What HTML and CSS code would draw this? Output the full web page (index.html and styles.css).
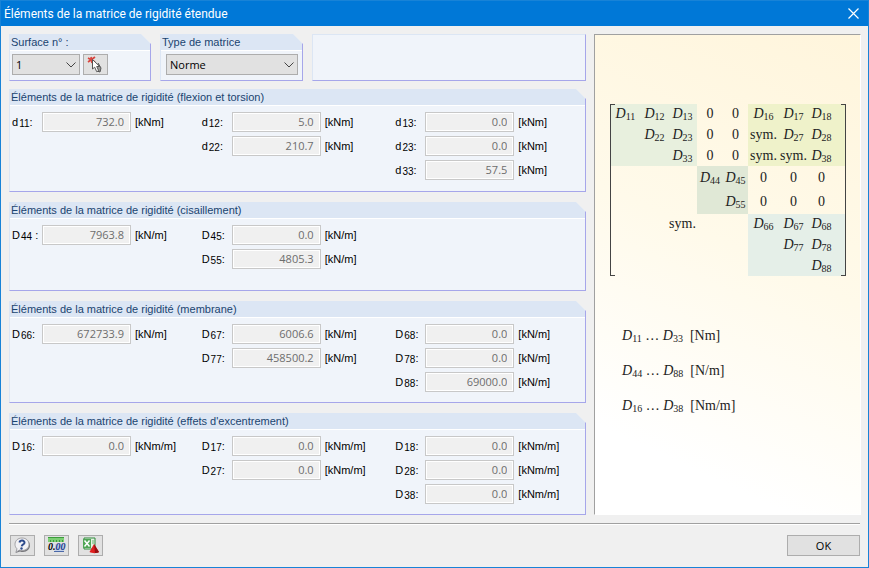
FILE: index.html
```html
<!DOCTYPE html>
<html lang="fr">
<head>
  <meta charset="utf-8">
  <title>Éléments de la matrice de rigidité étendue</title>
  <link rel="stylesheet" href="styles.css">
</head>
<body>
  <header class="titlebar">
    <h1>Éléments de la matrice de rigidité étendue</h1>
    <button class="close" type="button" aria-label="Fermer">
      <svg width="11" height="11" viewBox="0 0 11 11"><path d="M.5.5l10 10M10.5.5l-10 10" stroke="#fff" stroke-width="1.2" fill="none"/></svg>
    </button>
  </header>

  <main class="content">
    <div class="left">
      <div class="top-row">
        <section class="group">
          <label class="group-title" for="surface">Surface n° :</label>
          <div class="controls">
            <span class="select select-small">
              <select id="surface"><option>1</option></select>
              <svg width="10" height="6" viewBox="0 0 10 6"><path d="M.5.5L5 5L9.5.5" stroke="#444" fill="none"/></svg>
            </span>
            <button class="tool" type="button" aria-label="Sélectionner la surface">
              <svg width="19" height="17" viewBox="0 0 19 17">
                <path d="M2 2l7 4M9 1L2 6M5 1l1 6" stroke="#d8453f" stroke-width="1.7"/>
                <path d="M12 7l3 5-1 4-3-1" fill="#999" stroke="#555"/>
                <path d="M6.500 3.500v9.500l2.200-1.800 2 4.500 2-1-2-4.200h3z" fill="#fff" stroke="#555"/>
              </svg>
            </button>
          </div>
        </section>
        <section class="group">
          <label class="group-title" for="type">Type de matrice</label>
          <div class="controls controls-type">
            <span class="select">
              <select id="type"><option>Norme</option></select>
              <svg width="10" height="6" viewBox="0 0 10 6"><path d="M.5.5L5 5L9.5.5" stroke="#444" fill="none"/></svg>
            </span>
          </div>
        </section>
        <div class="group-empty"></div>
      </div>

      <section class="group flexion">
        <h2 class="group-title">Éléments de la matrice de rigidité (flexion et torsion)</h2>
        <div class="fields">
          <div class="col">
            <div class="field"><label for="d11">d<sub>11</sub>:</label><input id="d11" type="text" value="732.0" disabled><span>[kNm]</span></div>
          </div>
          <div class="col">
            <div class="field"><label for="d12">d<sub>12</sub>:</label><input id="d12" type="text" value="5.0" disabled><span>[kNm]</span></div>
            <div class="field"><label for="d22">d<sub>22</sub>:</label><input id="d22" type="text" value="210.7" disabled><span>[kNm]</span></div>
          </div>
          <div class="col">
            <div class="field"><label for="d13">d<sub>13</sub>:</label><input id="d13" type="text" value="0.0" disabled><span>[kNm]</span></div>
            <div class="field"><label for="d23">d<sub>23</sub>:</label><input id="d23" type="text" value="0.0" disabled><span>[kNm]</span></div>
            <div class="field"><label for="d33">d<sub>33</sub>:</label><input id="d33" type="text" value="57.5" disabled><span>[kNm]</span></div>
          </div>
        </div>
      </section>

      <section class="group cisaillement">
        <h2 class="group-title">Éléments de la matrice de rigidité (cisaillement)</h2>
        <div class="fields">
          <div class="col">
            <div class="field"><label for="d44">D<sub>44</sub> :</label><input id="d44" type="text" value="7963.8" disabled><span>[kN/m]</span></div>
          </div>
          <div class="col">
            <div class="field"><label for="d45">D<sub>45</sub>:</label><input id="d45" type="text" value="0.0" disabled><span>[kN/m]</span></div>
            <div class="field"><label for="d55">D<sub>55</sub>:</label><input id="d55" type="text" value="4805.3" disabled><span>[kN/m]</span></div>
          </div>
        </div>
      </section>

      <section class="group membrane">
        <h2 class="group-title">Éléments de la matrice de rigidité (membrane)</h2>
        <div class="fields">
          <div class="col">
            <div class="field"><label for="d66">D<sub>66</sub>:</label><input id="d66" type="text" value="672733.9" disabled><span>[kN/m]</span></div>
          </div>
          <div class="col">
            <div class="field"><label for="d67">D<sub>67</sub>:</label><input id="d67" type="text" value="6006.6" disabled><span>[kN/m]</span></div>
            <div class="field"><label for="d77">D<sub>77</sub>:</label><input id="d77" type="text" value="458500.2" disabled><span>[kN/m]</span></div>
          </div>
          <div class="col">
            <div class="field"><label for="d68">D<sub>68</sub>:</label><input id="d68" type="text" value="0.0" disabled><span>[kN/m]</span></div>
            <div class="field"><label for="d78">D<sub>78</sub>:</label><input id="d78" type="text" value="0.0" disabled><span>[kN/m]</span></div>
            <div class="field"><label for="d88">D<sub>88</sub>:</label><input id="d88" type="text" value="69000.0" disabled><span>[kN/m]</span></div>
          </div>
        </div>
      </section>

      <section class="group excentrement">
        <h2 class="group-title">Éléments de la matrice de rigidité (effets d'excentrement)</h2>
        <div class="fields">
          <div class="col">
            <div class="field"><label for="d16">D<sub>16</sub>:</label><input id="d16" type="text" value="0.0" disabled><span>[kNm/m]</span></div>
          </div>
          <div class="col">
            <div class="field"><label for="d17">D<sub>17</sub>:</label><input id="d17" type="text" value="0.0" disabled><span>[kNm/m]</span></div>
            <div class="field"><label for="d27">D<sub>27</sub>:</label><input id="d27" type="text" value="0.0" disabled><span>[kNm/m]</span></div>
          </div>
          <div class="col">
            <div class="field"><label for="d18">D<sub>18</sub>:</label><input id="d18" type="text" value="0.0" disabled><span>[kNm/m]</span></div>
            <div class="field"><label for="d28">D<sub>28</sub>:</label><input id="d28" type="text" value="0.0" disabled><span>[kNm/m]</span></div>
            <div class="field"><label for="d38">D<sub>38</sub>:</label><input id="d38" type="text" value="0.0" disabled><span>[kNm/m]</span></div>
          </div>
        </div>
      </section>
    </div>

    <aside class="preview">
      <div class="matrix">
        <div class="shade-flexion"></div>
        <div class="shade-excentrement"></div>
        <div class="shade-cisaillement"></div>
        <div class="shade-membrane"></div>

        <span class="r1 c1"><i>D</i><sub>11</sub></span>
        <span class="r1 c2"><i>D</i><sub>12</sub></span>
        <span class="r1 c3"><i>D</i><sub>13</sub></span>
        <span class="r1 c4">0</span>
        <span class="r1 c5">0</span>
        <span class="r1 c6"><i>D</i><sub>16</sub></span>
        <span class="r1 c7"><i>D</i><sub>17</sub></span>
        <span class="r1 c8"><i>D</i><sub>18</sub></span>

        <span class="r2 c2"><i>D</i><sub>22</sub></span>
        <span class="r2 c3"><i>D</i><sub>23</sub></span>
        <span class="r2 c4">0</span>
        <span class="r2 c5">0</span>
        <span class="r2 c6">sym.</span>
        <span class="r2 c7"><i>D</i><sub>27</sub></span>
        <span class="r2 c8"><i>D</i><sub>28</sub></span>

        <span class="r3 c3"><i>D</i><sub>33</sub></span>
        <span class="r3 c4">0</span>
        <span class="r3 c5">0</span>
        <span class="r3 c6">sym.</span>
        <span class="r3 c7">sym.</span>
        <span class="r3 c8"><i>D</i><sub>38</sub></span>

        <span class="r4 c4"><i>D</i><sub>44</sub></span>
        <span class="r4 c5"><i>D</i><sub>45</sub></span>
        <span class="r4 c6">0</span>
        <span class="r4 c7">0</span>
        <span class="r4 c8">0</span>

        <span class="r5 c5"><i>D</i><sub>55</sub></span>
        <span class="r5 c6">0</span>
        <span class="r5 c7">0</span>
        <span class="r5 c8">0</span>

        <span class="r6 c3">sym.</span>
        <span class="r6 c6"><i>D</i><sub>66</sub></span>
        <span class="r6 c7"><i>D</i><sub>67</sub></span>
        <span class="r6 c8"><i>D</i><sub>68</sub></span>

        <span class="r7 c7"><i>D</i><sub>77</sub></span>
        <span class="r7 c8"><i>D</i><sub>78</sub></span>

        <span class="r8 c8"><i>D</i><sub>88</sub></span>
      </div>
      <div class="units">
        <p><i>D</i><sub>11</sub> … <i>D</i><sub>33</sub>&nbsp; [Nm]</p>
        <p><i>D</i><sub>44</sub> … <i>D</i><sub>88</sub>&nbsp; [N/m]</p>
        <p><i>D</i><sub>16</sub> … <i>D</i><sub>38</sub>&nbsp; [Nm/m]</p>
      </div>
    </aside>
  </main>

  <footer class="footer">
    <button class="tool" type="button" aria-label="Aide">
      <svg width="19" height="17" viewBox="0 0 19 17">
        <path d="M10 2c4.500 0 7 3 7 6.500S14 15 10 15c-1 0-2-.2-3-.6L2.500 16l1.300-3.500z" fill="#77777b"/>
        <path d="M9 1c4.300 0 7 2.900 7 6.300s-2.700 6.200-7 6.200c-.9 0-1.700-.1-2.500-.4L3 15l1-3.200C2.700 10.700 2 9 2 7.300 2 3.900 4.700 1 9 1z" fill="#f2f2f5" stroke="#a2a2a6"/>
        <path d="M6.500 5.500c.5-2.700 5.200-2.500 5 .2 0 1.800-2.500 1.600-2.800 3.600" fill="none" stroke="#2c4a8c" stroke-width="2"/>
        <circle cx="8.500" cy="11.500" r="1.200" fill="#2c4a8c"/>
      </svg>
    </button>
    <button class="tool" type="button" aria-label="Décimales">
      <svg width="19" height="17" viewBox="0 0 19 17">
        <path d="M1 0h16v5H1z" fill="#7ccf74"/>
        <path d="M1 .5h16M3.500 3v2M6.500 3v2M9.500 3v2M12.500 3v2M15.500 3v2" stroke="#3c9c3c"/>
        <path d="M8 7h9v8H8z" fill="#c3d0e8"/>
        <text x="1" y="13" class="icon-digits">0.<tspan fill="#1c3c8c">00</tspan></text>
        <path d="M7 14.500h10" stroke="#4a68a8"/>
      </svg>
    </button>
    <button class="tool" type="button" aria-label="Exporter vers Excel">
      <svg width="19" height="17" viewBox="0 0 19 17">
        <path d="M3 1h11v11H3z" fill="#e4f2e2" stroke="#2f8a3b"/>
        <path d="M2 2h8v9H2z" fill="#4fa655"/>
        <path d="M3.500 3.500l5 6M8.500 3.500l-5 6" stroke="#fff" stroke-width="1.500"/>
        <path d="M11 4h2M11 6h2" stroke="#6bb36f"/>
        <path d="M13 7l5 8c-2 1.500-7 1.500-9.500 0z" fill="#e02020"/>
        <path d="M13 7l5 8c-1 .7-2.300 1-4 1z" fill="#980f12"/>
      </svg>
    </button>
    <button class="ok" type="button">OK</button>
  </footer>
</body>
</html>
```
FILE: styles.css
```css
* {
  box-sizing: border-box;
}

body {
  margin: 0;
  min-height: 100vh;
  display: flex;
  flex-direction: column;
  background: #f0f0f0;
  border: 1px solid #1883d7;
  font-family: "Liberation Sans", Arial, sans-serif;
  font-size: 11px;
  color: #000;
}

h1, h2, p {
  margin: 0;
  font-weight: normal;
}

button, select, input {
  margin: 0;
  padding: 0;
  border-radius: 0;
  font-family: "Open Sans", sans-serif;
  font-size: 11px;
  color: #000;
}

button {
  display: flex;
  align-items: center;
  justify-content: center;
}

/* title bar */
.titlebar {
  display: flex;
  align-items: center;
  justify-content: space-between;
  height: 25px;
  padding: 0 9px 0 3px;
  background: #0078d7;
}

.titlebar h1 {
  font-family: Roboto, sans-serif;
  font-size: 12px;
  line-height: 24px;
  color: #fff;
}

.close {
  border: none;
  background: none;
}

/* layout */
.content {
  flex: 1;
  display: grid;
  grid-template-columns: 577fr 267fr;
  gap: 8px;
  padding: 8px 7px 8px 8px;
}

.left {
  display: flex;
  flex-direction: column;
  gap: 10px;
}

.top-row {
  display: grid;
  grid-template-columns: 142fr 143fr 274fr;
  column-gap: 9px;
  margin-bottom: -2px;
}

/* groups */
.group {
  background: #f0f4fa;
  border-left: 1px solid #dce6f4;
  border-right: 1px solid #a6a6ea;
  border-bottom: 1px solid #a6a6ea;
  clip-path: polygon(0 0, calc(100% - 10px) 0, 100% 10px, 100% 100%, 0 100%);
}

.group-title {
  display: block;
  height: 17px;
  padding-left: 1px;
  background: #dce6f4;
  border-bottom: 1px solid #fff;
  font-size: 11px;
  line-height: 17px;
  color: #1a4470;
}

.group-empty {
  background: #f0f4fa;
  border: 1px solid #dce6f4;
  border-right-color: #a6a6ea;
  border-bottom-color: #a6a6ea;
}

.flexion {
  min-height: 103px;
}

.cisaillement {
  min-height: 89px;
}

.membrane, .excentrement {
  min-height: 102px;
}

.controls {
  display: flex;
  gap: 3px;
  padding: 3px 4px 5px 2px;
}

.controls-type {
  padding-left: 5px;
}

.select {
  position: relative;
  flex: 1;
}

.select-small {
  flex: 0 0 68px;
}

.select select {
  display: block;
  width: 100%;
  height: 21px;
  padding-left: 3px;
  appearance: none;
  background: #e1e1e1;
  border: 1px solid #adadad;
}

.select svg {
  position: absolute;
  right: 4px;
  top: 8px;
  pointer-events: none;
}

.tool {
  width: 25px;
  height: 21px;
  background: #e1e1e1;
  border: 1px solid #adadad;
}

/* fields */
.fields {
  display: grid;
  grid-template-columns: 190fr 194fr 190fr;
  padding: 6px 0 8px 2px;
}

.col {
  display: flex;
  flex-direction: column;
  gap: 4px;
}

.field {
  display: flex;
  align-items: center;
  height: 20px;
}

.field label {
  width: 30px;
  white-space: nowrap;
}

.field label sub {
  margin-left: 1px;
  font-size: 10px;
  line-height: 10px;
  vertical-align: -1px;
}

.field input {
  width: 89px;
  height: 20px;
  margin-right: 4px;
  padding: 0 6px 2px 0;
  background: #f0f0f0;
  border: 1px solid #c8c8c8;
  box-shadow: inset 0 0 0 1px #fff;
  text-align: right;
  color: #6d6d6d;
}

/* matrix preview */
.preview {
  padding: 69px 14px 0 15px;
  background: linear-gradient(205deg, #fff5dc 0%, #fffaea 45%, #fff 85%);
  border: 1px solid #fff;
  border-top-color: #a0a0a0;
  border-left-color: #a0a0a0;
  font-family: "Liberation Serif", serif;
  font-size: 14px;
  color: #222;
}

.preview sub {
  font-size: 10px;
  line-height: 10px;
  vertical-align: -2px;
}

.matrix {
  position: relative;
  display: grid;
  grid-template-columns: 31fr 27fr 29fr 26fr 25fr 31fr 29fr 27fr 11fr;
  grid-template-rows: 20px 22px 20px 24px 24px 20px 22px 20px;
}

.matrix::before, .matrix::after {
  content: "";
  position: absolute;
  top: 0;
  bottom: 0;
  left: 0;
  width: 4px;
  border: 1px solid #444;
  border-right: none;
}

.matrix::after {
  left: auto;
  right: 0;
  border-right: 1px solid #444;
  border-left: none;
}

.matrix span {
  align-self: center;
  justify-self: center;
  line-height: 20px;
  white-space: nowrap;
}

.shade-flexion {
  grid-area: 1 / 1 / 4 / 4;
  background: #e8f0de;
}

.shade-excentrement {
  grid-area: 1 / 6 / 4 / 10;
  background: #eff2ca;
}

.shade-cisaillement {
  grid-area: 4 / 4 / 6 / 6;
  background: #e0e8d6;
}

.shade-membrane {
  grid-area: 6 / 6 / 9 / 10;
  background: #e5efe8;
}

.r1 { grid-row: 1; }
.r2 { grid-row: 2; }
.r3 { grid-row: 3; }
.r4 { grid-row: 4; }
.r5 { grid-row: 5; }
.r6 { grid-row: 6; }
.r7 { grid-row: 7; }
.r8 { grid-row: 8; }

.c1 { grid-column: 1; }
.c2 { grid-column: 2; }
.c3 { grid-column: 3; }
.c4 { grid-column: 4; }
.c5 { grid-column: 5; }
.c6 { grid-column: 6; }
.c7 { grid-column: 7; }
.c8 { grid-column: 8; }

.units {
  display: flex;
  flex-direction: column;
  gap: 15px;
  margin-top: 50px;
  padding-left: 12px;
  line-height: 20px;
}

/* footer */
.footer {
  display: flex;
  align-items: center;
  gap: 9px;
  margin: 0 8px;
  padding: 11px 0 11px 1px;
  border-top: 1px solid #a0a0a0;
  box-shadow: inset 0 1px 0 #fff;
}

.icon-digits {
  font-family: "Liberation Serif", serif;
  font-size: 10px;
  font-style: italic;
  font-weight: bold;
}

.ok {
  width: 73px;
  height: 21px;
  margin-left: auto;
  background: #e1e1e1;
  border: 1px solid #adadad;
}
```
